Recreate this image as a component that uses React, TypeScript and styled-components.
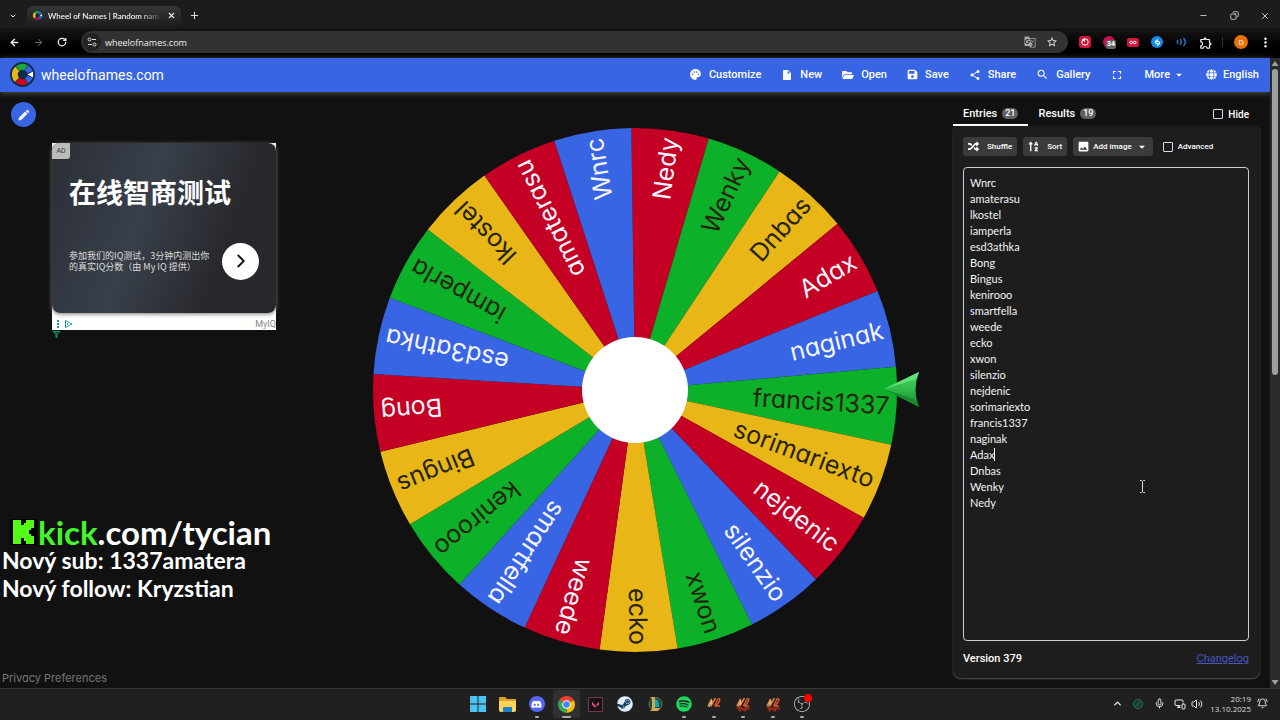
import React from "react";
import styled, { createGlobalStyle, css } from "styled-components";
import {
  MdPalette, MdInsertDriveFile, MdShare, MdSearch, MdFullscreen, MdArrowDropDown, MdEdit, MdImage,
  MdStarBorder, MdMoreVert, MdGTranslate, MdOutlineExtension,
} from "react-icons/md";
import { FaFolderOpen, FaGlobe, FaRandom, FaSortAlphaUp, FaDiscord, FaSteam, FaSpotify, FaSave } from "react-icons/fa";
import { SiValorant, SiObsstudio } from "react-icons/si";
import { ArrowLeft, ArrowRight, RotateCw, ChevronDown, ChevronUp, ChevronRight, X, Plus, Minus, Copy, Mic, MonitorSmartphone, Volume2, BellRing } from "lucide-react";

const ui = `Roboto, "Liberation Sans", sans-serif`;
const system = `"Open Sans", "Noto Sans", sans-serif`;
const rounded = `Lato, "Open Sans", sans-serif`;

const GlobalStyle = createGlobalStyle`
  *, *::before, *::after { box-sizing: border-box; }
  body { margin: 0; background: #111; color: #fff; font-family: ${ui}; font-size: 11px; }
  button { font: inherit; color: inherit; background: none; border: 0; padding: 0; }
  svg { display: block; flex: none; }
`;

const Screen = styled.div`
  display: flex;
  flex-direction: column;
  min-height: 100vh;
`;

/* ---------- browser chrome ---------- */
const TabStrip = styled.div`
  display: flex;
  align-items: center;
  height: 28px;
  padding: 3px 9px 0 7px;
  background: #1c1c1c;
  font-family: ${rounded};
`;
const Tab = styled.div`
  display: flex;
  align-items: center;
  width: 154px;
  height: 20px;
  margin: 0 7px 0 8px;
  padding: 0 4px 0 5px;
  gap: 5px;
  border-radius: 6px 6px 0 0;
  background: linear-gradient(#373737, #1d1d1d);
  font-size: 8px;
  font-weight: 500;
`;
const TabTitle = styled.span`
  flex: 1;
  white-space: nowrap;
  mask-image: linear-gradient(90deg, #000 82%, transparent 102%);
`;
const IconButton = styled.button<{ $size?: number; $dim?: boolean }>`
  display: flex;
  align-items: center;
  justify-content: center;
  width: ${(p) => p.$size ?? 12}px;
  height: ${(p) => p.$size ?? 12}px;
  color: ${(p) => (p.$dim ? "#777" : "#eee")};
`;
const WindowControls = styled.div`
  display: flex;
  gap: 19px;
  margin-left: auto;
`;
const RestoreIcon = styled(Copy)`
  transform: scaleX(-1);
`;
const Toolbar = styled.div`
  display: flex;
  align-items: center;
  height: 30px;
  padding: 0 10px 2px 8px;
  background: linear-gradient(#161616, #000 60%);
`;
const NavButtons = styled.div`
  display: flex;
  gap: 12px;
  margin-right: 13px;
`;
const AddressBar = styled.div`
  display: flex;
  align-items: center;
  flex: 1;
  height: 22px;
  padding: 0 10px 0 2px;
  gap: 10px;
  border-radius: 11px;
  background: #323232;
`;
const SiteInfo = styled.button`
  display: grid;
  place-items: center;
  width: 18px;
  height: 18px;
  margin-right: -6px;
  border-radius: 50%;
  background: #232323;
`;
const Address = styled.input`
  flex: 1;
  min-width: 0;
  padding: 0;
  border: 0;
  outline: 0;
  background: none;
  color: #eee;
  font: 9px ${system};
`;
const Extensions = styled.div`
  display: flex;
  align-items: center;
  gap: 12px;
  margin-left: 11px;
`;
const ExtensionIcon = styled.button<{ $bg?: string; $round?: boolean }>`
  position: relative;
  display: grid;
  place-items: center;
  width: 12px;
  height: 12px;
  border-radius: ${(p) => (p.$round ? "50%" : "3px")};
  background: ${(p) => p.$bg ?? "none"};
`;
const ExtensionCount = styled.span`
  position: absolute;
  left: 3px;
  top: 4px;
  padding: 0 1px;
  border-radius: 2px;
  background: #666;
  font-size: 7px;
  font-weight: 700;
  line-height: 9px;
`;
const Divider = styled.span`
  width: 1px;
  height: 10px;
  margin: 0 -1px;
  background: #333;
`;
const Profile = styled.button`
  width: 14px;
  height: 14px;
  border-radius: 50%;
  background: #e8710a;
  color: #fff;
  font-size: 8px;
`;

/* ---------- page ---------- */
const Viewport = styled.div`
  display: flex;
  flex: 1;
`;
const Page = styled.div`
  display: flex;
  flex: 1;
  flex-direction: column;
  min-width: 0;
  background: #111;
`;
const Scrollbar = styled.div`
  display: flex;
  flex-direction: column;
  align-items: center;
  justify-content: space-between;
  width: 10px;
  padding: 3px 0;
  background: #2b2b2b;
`;
const ScrollThumb = styled.div`
  width: 6px;
  height: 49%;
  margin: 2px 0 auto;
  border-radius: 3px;
  background: #9f9f9f;
`;
const Header = styled.header`
  display: flex;
  align-items: center;
  justify-content: space-between;
  height: 34px;
  padding: 0 1px 1px 10px;
  background: #3765e3;
  box-shadow: 0 1px 6px #555;
`;
const Brand = styled.a`
  display: flex;
  align-items: center;
  gap: 6px;
  color: #fff;
  font-size: 14px;
  text-decoration: none;
`;
const Menu = styled.nav`
  display: flex;
`;
const MenuButton = styled.button<{ $gap?: number }>`
  display: flex;
  align-items: center;
  gap: ${(p) => p.$gap ?? 7}px;
  height: 33px;
  padding: 0 10px;
  font-size: 11px;
  font-weight: 500;
`;
const Content = styled.main`
  display: grid;
  grid-template-columns: 330px minmax(0, 1fr) 330px;
  flex: 1;
`;
const LeftColumn = styled.section`
  display: flex;
  flex-direction: column;
  align-items: flex-start;
  padding: 10px 0 2px 2px;
`;
const EditButton = styled.button`
  display: grid;
  place-items: center;
  width: 25px;
  height: 25px;
  margin-left: 9px;
  border-radius: 50%;
  background: #3765e3;
`;
const Ad = styled.aside`
  width: 224px;
  margin: 16px 0 0 50px;
  background: #fff;
  font-family: "Noto Sans CJK SC", sans-serif;
`;
const AdCard = styled.div`
  display: grid;
  grid-template-rows: 16px 66px 1fr;
  height: 170px;
  border-radius: 8px;
  overflow: hidden;
  background: linear-gradient(110deg, #2b2e35, #39404a 40%, #27282c 75%);
  box-shadow: 0 1px 4px #777;
`;
const AdBadge = styled.span`
  justify-self: start;
  width: 18px;
  border-radius: 0 0 3px 0;
  background: #bbb;
  color: #333;
  font: 7px/16px ${ui};
  text-align: center;
`;
const AdTitle = styled.h2`
  margin: 0;
  padding-left: 17px;
  font-size: 27px;
  font-weight: 700;
  line-height: 66px;
`;
const AdBody = styled.div`
  display: flex;
  align-items: center;
  justify-content: space-between;
  padding: 0 17px 16px;
`;
const AdText = styled.p`
  margin: 0;
  color: #ddd;
  font-size: 9px;
  line-height: 11px;
  white-space: nowrap;
`;
const AdGo = styled.button`
  display: grid;
  place-items: center;
  width: 37px;
  height: 37px;
  border-radius: 50%;
  background: #fff;
  color: #111;
`;
const AdFooter = styled.div`
  display: flex;
  align-items: center;
  justify-content: space-between;
  height: 17px;
  padding: 5px 0 0 4px;
  color: #888;
  font: 9px/12px ${ui};
`;
const AdMark = styled.div`
  margin-left: 50px;
`;
const StreamInfo = styled.div`
  margin-top: auto;
  font-family: ${rounded};
  font-weight: 700;
`;
const KickLine = styled.div`
  display: flex;
  align-items: center;
  gap: 1px;
  margin-left: 8px;
  font-size: 33px;
  line-height: 28px;
`;
const Green = styled.span`
  color: #45f52c;
`;
const StreamLine = styled.div`
  font-size: 23px;
  line-height: 28px;
  white-space: nowrap;
`;
const Privacy = styled.button`
  margin-top: 68px;
  color: #777;
  font: 11px/16px Inter, sans-serif;
  font-feature-settings: "cv11";
`;
const WheelArea = styled.section`
  padding-top: 33px;
`;
const WheelSvg = styled.svg`
  width: 100%;
  max-height: 580px;
`;
const WheelText = styled.text`
  font-family: Inter, sans-serif;
  font-size: 25px;
  font-feature-settings: "cv11";
  dominant-baseline: central;
`;

/* ---------- entries panel ---------- */
const RightColumn = styled.section`
  display: flex;
  flex-direction: column;
  padding: 10px 10px 10px 13px;
`;
const TabRow = styled.div`
  display: flex;
  align-items: center;
  height: 24px;
`;
const PanelTab = styled.button<{ $active?: boolean }>`
  display: flex;
  align-items: center;
  gap: 5px;
  height: 24px;
  padding: 0 10px;
  border-bottom: 2px solid ${(p) => (p.$active ? "#fff" : "transparent")};
  font-size: 11px;
  font-weight: 500;
`;
const Count = styled.span`
  padding: 0 3px;
  border-radius: 6px;
  background: #606060;
  font-size: 9px;
  line-height: 11px;
`;
const CheckLabel = styled.label<{ $end?: boolean }>`
  display: flex;
  align-items: center;
  gap: 5px;
  margin-left: 4px;
  font-size: ${(p) => (p.$end ? 10 : 8)}px;
  font-weight: 500;
  ${(p) => p.$end && css`margin: 0 11px 0 auto;`}
`;
const Check = styled.input`
  appearance: none;
  width: 10px;
  height: 10px;
  margin: 0;
  border: 1px solid #ddd;
  border-radius: 1px;
`;
const Panel = styled.div`
  display: flex;
  flex: 1;
  flex-direction: column;
  padding: 11px 11px 0 10px;
  border-radius: 4px 4px 8px 8px;
  background: #1d1d1d;
  box-shadow: 0 1px 2px #555;
`;
const Tools = styled.div`
  display: flex;
  align-items: center;
  gap: 6px;
  margin-bottom: 11px;
`;
const ToolButton = styled.button<{ $gap?: number }>`
  display: flex;
  align-items: center;
  gap: ${(p) => p.$gap ?? 8}px;
  height: 19px;
  padding: 0 ${(p) => (p.$gap ? 4 : 5)}px;
  border-radius: 3px;
  background: #3b3b3b;
  font-size: 8px;
  font-weight: 500;
`;
const EntriesBox = styled.div`
  position: relative;
  display: flex;
  flex: 1;
`;
const EntriesInput = styled.textarea`
  flex: 1;
  min-height: 400px;
  padding: 7px 6px;
  border: 1px solid #ccc;
  border-radius: 4px;
  outline: 0;
  background: #1d1d1d;
  color: #f4f4f4;
  font: 11px/16px ${rounded};
  resize: none;
`;
const TextCaret = styled.span`
  position: absolute;
  left: 31px;
  top: 281px;
  width: 1px;
  height: 13px;
  background: #fff;
`;
const Pointer = styled.svg`
  position: absolute;
  left: 176px;
  top: 313px;
`;
const PanelFooter = styled.footer`
  display: flex;
  align-items: center;
  justify-content: space-between;
  height: 37px;
  padding-bottom: 2px;
  font-size: 11px;
  font-weight: 500;
`;
const Changelog = styled.a`
  color: #4a58c4;
  font-weight: 400;
`;

/* ---------- desktop taskbar ---------- */
const Taskbar = styled.footer`
  display: grid;
  grid-template-columns: 1fr auto 1fr;
  height: 32px;
  padding-bottom: 2px;
  border-top: 1px solid #383838;
  background: #202020;
`;
const Apps = styled.div`
  display: flex;
  grid-column: 2;
  width: 354px;
`;
const TaskbarApp = styled.button<{ $running?: boolean; $active?: boolean }>`
  position: relative;
  display: grid;
  flex: 1;
  place-items: center;
  margin: 1px 1px 0;
  border-radius: 3px;
  background: ${(p) => (p.$active ? "#303030" : "none")};
  &::after {
    content: "";
    position: absolute;
    bottom: 0;
    width: ${(p) => (p.$active ? 9 : 4)}px;
    height: 2px;
    border-radius: 1px;
    background: ${(p) => (p.$running ? "#aaa" : "none")};
  }
`;
const Disc = styled.span<{ $bg: string }>`
  display: grid;
  place-items: center;
  width: 16px;
  height: 16px;
  border-radius: 50%;
  background: ${(p) => p.$bg};
`;
const Tray = styled.div`
  display: flex;
  align-items: center;
  justify-content: flex-end;
  padding-right: 12px;
  color: #ddd;
`;
const TrayIcons = styled.div<{ $tight?: boolean }>`
  display: flex;
  align-items: center;
  gap: ${(p) => (p.$tight ? 5 : 9)}px;
  margin-right: ${(p) => (p.$tight ? 7 : 9)}px;
`;
const Clock = styled.div`
  margin-right: 5px;
  font: 8px/10px ${system};
  text-align: right;
`;

const slices = [
  "Nedy", "Wenky", "Dnbas", "Adax", "naginak", "francis1337", "sorimariexto", "nejdenic", "silenzio", "xwon", "ecko",
  "weede", "smartfella", "kenirooo", "Bingus", "Bong", "esd3athka", "iamperla", "lkostel", "amaterasu", "Wnrc",
];
const red = "#c40025";
const blue = "#3765e3";
const palette = [blue, "#0cb129", "#e8b717", red];
const sliceColor = (i: number) => (i === 0 ? red : palette[i % palette.length]);

function Wheel() {
  const step = 360 / slices.length;
  const start = -90.8;
  const radius = 262;
  const point = (deg: number) => {
    const r = (deg * Math.PI) / 180;
    return `${radius * Math.cos(r)} ${radius * Math.sin(r)}`;
  };
  return (
    <WheelSvg viewBox="0 0 610 530" role="img" aria-label="Wheel of names">
      <defs>
        <linearGradient id="pointer" x1="0" y1="0" x2="0" y2="1">
          <stop offset="0" stopColor="#50d56a" />
          <stop offset=".5" stopColor="#2fbb49" />
          <stop offset="1" stopColor="#17802b" />
        </linearGradient>
      </defs>
      <g transform="translate(305 265)">
        {slices.map((name, i) => {
          const a = start + i * step;
          const fill = sliceColor(i);
          const light = fill === red || fill === blue;
          return (
            <g key={name}>
              <path d={`M0 0L${point(a)}A${radius} ${radius} 0 0 1 ${point(a + step)}Z`} fill={fill} />
              <WheelText x={255} y={0} textAnchor="end" fill={light ? "#f6f4fb" : "#26240c"} transform={`rotate(${a + step / 2})`}>
                {name}
              </WheelText>
            </g>
          );
        })}
        <circle r="53" fill="#fff" />
      </g>
      <path d="M554 264L589 247Q582 265 589 282Z" fill="url(#pointer)" />
      <path d="M554 264L589 247L586 254Z" fill="#62e07a" />
      <path d="M554 264L589 282L586 275Z" fill="#18882f" />
    </WheelSvg>
  );
}

const WheelLogo = ({ size }: { size: number }) => (
  <svg width={size} height={size} viewBox="0 0 26 26">
    <circle cx="13" cy="13" r="13" fill="#0c2c4a" />
    <g fill="none" strokeWidth="6" transform="translate(13 13)">
      <path d="M-5 -6.200A8 8 0 0 1 3.500 -7.200" stroke="#1fa838" />
      <path d="M4 -7A8 8 0 0 1 7.600 -2.500" stroke={blue} />
      <path d="M-5.800 5.500A8 8 0 0 1 -5.400 -5.900" stroke="#e8b717" />
      <path d="M3.800 7A8 8 0 0 1 -5.400 5.900" stroke="#d0021f" />
      <path d="M7.600 2.500A8 8 0 0 1 4.300 6.700" stroke={blue} />
    </g>
    <path d="M18 13L24 10V16Z" fill="#fff" />
  </svg>
);

const KickLogo = () => (
  <svg width="27" height="26" viewBox="0 0 27 26">
    <path d="M0 0H27V26H0Z" fill="#000" />
    <path d="M3 1H11V6H14V4H16V1H24V9H21V11H19V15H21V17H24V25H16V22H14V19H11V25H3Z" fill="#53fc18" />
  </svg>
);

const Chrome = () => (
  <svg width="17" height="17" viewBox="-10 -10 20 20">
    <path d="M0 0L-8.660 -5A10 10 0 0 1 8.660 -5Z" fill="#e94235" />
    <path d="M0 0L8.660 -5A10 10 0 0 1 0 10Z" fill="#fbbc04" />
    <path d="M0 0L0 10A10 10 0 0 1 -8.660 -5Z" fill="#34a853" />
    <circle r="5" fill="#fff" />
    <circle r="3.900" fill="#4285f4" />
  </svg>
);

const Flame = ({ tall }: { tall?: boolean }) => (
  <svg width="16" height="16" viewBox="0 0 16 16">
    <g fill="none" stroke="#e89048" strokeWidth="1.500">
      <path d="M2 10L5.500 3V9L9.500 2" />
      <path d="M8.500 10L12 3Q15 2 13 6L10 10H14" stroke="#d8582a" />
      <path d="M3 11L6 5" stroke="#fce0a0" strokeWidth="1" />
    </g>
    {tall && <path d="M1 11L5 10L8 12L14 10L15 14L12 13L11 16L7 14L4 16L3 13Z" fill="#8f2a1a" />}
  </svg>
);

const entries = [...slices].reverse().join("\n");

export default function App() {
  return (
    <Screen>
      <GlobalStyle />
      <TabStrip>
        <IconButton aria-label="Search tabs"><ChevronDown size={8} strokeWidth={3} /></IconButton>
        <Tab>
          <WheelLogo size={11} />
          <TabTitle>Wheel of Names | Random nam</TabTitle>
          <IconButton aria-label="Close tab"><X size={9} strokeWidth={3} /></IconButton>
        </Tab>
        <IconButton aria-label="New tab"><Plus size={11} /></IconButton>
        <WindowControls>
          <IconButton aria-label="Minimize"><Minus size={9} /></IconButton>
          <IconButton aria-label="Restore"><RestoreIcon size={9} /></IconButton>
          <IconButton aria-label="Close"><X size={10} /></IconButton>
        </WindowControls>
      </TabStrip>
      <Toolbar>
        <NavButtons>
          <IconButton aria-label="Back"><ArrowLeft size={11} strokeWidth={3} /></IconButton>
          <IconButton aria-label="Forward" $dim><ArrowRight size={11} strokeWidth={2} /></IconButton>
          <IconButton aria-label="Reload"><RotateCw size={10} strokeWidth={3} /></IconButton>
        </NavButtons>
        <AddressBar>
          <SiteInfo aria-label="Site information">
            <svg width="10" height="10" viewBox="0 0 10 10" fill="none" stroke="#ddd">
              <circle cx="2.500" cy="2.500" r="1.500" /><path d="M5 2.500H9M1 7.500H5" /><circle cx="7.500" cy="7.500" r="1.500" />
            </svg>
          </SiteInfo>
          <Address aria-label="Address" defaultValue="wheelofnames.com" />
          <IconButton aria-label="Translate"><MdGTranslate size={12} color="#aaa" /></IconButton>
          <IconButton aria-label="Bookmark"><MdStarBorder size={12} /></IconButton>
        </AddressBar>
        <Extensions>
          <ExtensionIcon $bg="#d5143a" aria-label="Video blocker">
            <svg width="10" height="10" viewBox="0 0 10 10"><circle cx="5" cy="5" r="3.200" fill="none" stroke="#fff" /><path d="M5 5V1.500A3.500 3.500 0 0 0 2 3Z" fill="#fff" /></svg>
          </ExtensionIcon>
          <ExtensionIcon $bg="#c8104f" $round aria-label="Ad blocker"><ExtensionCount>34</ExtensionCount></ExtensionIcon>
          <ExtensionIcon aria-label="Video link">
            <svg width="12" height="10" viewBox="0 0 12 10"><rect width="12" height="9" y="1" rx="2" fill="#d5143a" /><g fill="none" stroke="#fff"><circle cx="4.200" cy="5.500" r="1.300" /><circle cx="7.800" cy="5.500" r="1.300" /></g></svg>
          </ExtensionIcon>
          <ExtensionIcon $bg="#168be5" $round aria-label="Music search">
            <svg width="9" height="9" viewBox="0 0 9 9" fill="none" stroke="#fff" strokeWidth="1.200"><path d="M5 1.500L2.500 3.500Q2 5 4 5.500L5.500 6M4 7.500L6.500 5.500Q7 4 5 3.500L3.500 3" /></svg>
          </ExtensionIcon>
          <ExtensionIcon aria-label="Volume">
            <svg width="11" height="10" viewBox="0 0 11 10" fill="none" stroke="#2180d8" strokeWidth="1.300"><path d="M1 3Q2.500 5 1 7M4 2Q6.500 5 4 8M7.500 1Q11 5 7.500 9" /></svg>
          </ExtensionIcon>
          <ExtensionIcon aria-label="Extensions"><MdOutlineExtension size={14} /></ExtensionIcon>
          <Divider />
          <Profile>D</Profile>
          <IconButton aria-label="Browser menu" $size={10}><MdMoreVert size={15} /></IconButton>
        </Extensions>
      </Toolbar>

      <Viewport>
        <Page>
          <Header>
            <Brand href="#"><WheelLogo size={25} />wheelofnames.com</Brand>
            <Menu>
              <MenuButton><MdPalette size={13} />Customize</MenuButton>
              <MenuButton><MdInsertDriveFile size={12} />New</MenuButton>
              <MenuButton><FaFolderOpen size={12} />Open</MenuButton>
              <MenuButton><FaSave size={11} />Save</MenuButton>
              <MenuButton><MdShare size={12} />Share</MenuButton>
              <MenuButton><MdSearch size={13} />Gallery</MenuButton>
              <MenuButton aria-label="Fullscreen"><MdFullscreen size={14} /></MenuButton>
              <MenuButton $gap={2}>More<MdArrowDropDown size={14} /></MenuButton>
              <MenuButton $gap={6}><FaGlobe size={11} />English</MenuButton>
            </Menu>
          </Header>
          <Content>
            <LeftColumn>
              <EditButton aria-label="Edit title"><MdEdit size={14} /></EditButton>
              <Ad>
                <AdCard>
                  <AdBadge>AD</AdBadge>
                  <AdTitle>在线智商测试</AdTitle>
                  <AdBody>
                    <AdText>参加我们的IQ测试，3分钟内测出你<br />的真实IQ分数（由 My IQ 提供）</AdText>
                    <AdGo aria-label="Open advertisement"><ChevronRight size={22} strokeWidth={2} /></AdGo>
                  </AdBody>
                </AdCard>
                <AdFooter>
                  <svg width="17" height="8" viewBox="0 0 17 8"><path d="M1 0H3V2H1ZM1 3H3V5H1ZM1 6H3V8H1Z" fill="#1696a8" /><path d="M9.500 .5L16 4L9.500 7.500ZM11.500 3V5" fill="none" stroke="#1696a8" /></svg>
                  MyIQ
                </AdFooter>
              </Ad>
              <AdMark>
                <svg width="9" height="8" viewBox="0 0 9 8" fill="none" stroke="#12a06c"><path d="M1 1.500H8L5 4.500V7.500H4V4.500ZM3 1.500L5 4.500" /></svg>
              </AdMark>
              <StreamInfo>
                <KickLine><KickLogo /><span><Green>kick</Green>.com/tycian</span></KickLine>
                <StreamLine>Nový sub: 1337amatera</StreamLine>
                <StreamLine>Nový follow: Kryzstian</StreamLine>
              </StreamInfo>
              <Privacy>Privacy Preferences</Privacy>
            </LeftColumn>
            <WheelArea><Wheel /></WheelArea>
            <RightColumn>
              <TabRow>
                <PanelTab $active>Entries<Count>21</Count></PanelTab>
                <PanelTab>Results<Count>19</Count></PanelTab>
                <CheckLabel $end><Check type="checkbox" />Hide</CheckLabel>
              </TabRow>
              <Panel>
                <Tools>
                  <ToolButton><FaRandom size={11} />Shuffle</ToolButton>
                  <ToolButton><FaSortAlphaUp size={11} />Sort</ToolButton>
                  <ToolButton $gap={3}><MdImage size={13} />Add image<MdArrowDropDown size={14} /></ToolButton>
                  <CheckLabel><Check type="checkbox" />Advanced</CheckLabel>
                </Tools>
                <EntriesBox>
                  <EntriesInput aria-label="Entries" defaultValue={entries} spellCheck={false} />
                  <TextCaret />
                  <Pointer width="7" height="13" viewBox="0 0 7 13" fill="none" stroke="#ddd"><path d="M1 .5H2.500L3.500 1.500L4.500 .5H6M3.500 1.500V11.500M1 12.500H2.500L3.500 11.500L4.500 12.500H6" /></Pointer>
                </EntriesBox>
                <PanelFooter>Version 379<Changelog href="#">Changelog</Changelog></PanelFooter>
              </Panel>
            </RightColumn>
          </Content>
        </Page>
        <Scrollbar aria-hidden>
          <svg width="8" height="6" viewBox="0 0 8 6"><path d="M4 0L7.500 5H.5Z" fill="#9f9f9f" /></svg>
          <ScrollThumb />
          <svg width="8" height="6" viewBox="0 0 8 6"><path d="M4 6L7.500 1H.5Z" fill="#9f9f9f" /></svg>
        </Scrollbar>
      </Viewport>

      <Taskbar>
        <Apps>
          <TaskbarApp aria-label="Start">
            <svg width="16" height="16" viewBox="0 0 16 16"><path d="M0 0H7.500V7.500H0ZM8.500 0H16V7.500H8.500ZM0 8.500H7.500V16H0ZM8.500 8.500H16V16H8.500Z" fill="#4cc2f1" /></svg>
          </TaskbarApp>
          <TaskbarApp aria-label="File Explorer">
            <svg width="17" height="15" viewBox="0 0 17 15"><path d="M0 1Q0 0 1 0H6L8 2H16Q17 2 17 3V14H0Z" fill="#e0a32a" /><path d="M0 4H17V13Q17 15 15 15H2Q0 15 0 13Z" fill="#fbd35b" /><path d="M4 15V11Q4 10 5 10H12Q13 10 13 11V15Z" fill="#1f7fc4" /></svg>
          </TaskbarApp>
          <TaskbarApp aria-label="Discord" $running><Disc $bg="#5865f2"><FaDiscord size={11} /></Disc></TaskbarApp>
          <TaskbarApp aria-label="Chrome" $running $active><Chrome /></TaskbarApp>
          <TaskbarApp aria-label="Valorant">
            <svg width="15" height="15" viewBox="0 0 15 15"><path d="M.5 .5H14.500V14.500H.5Z" fill="#17121a" stroke="#7d3348" /><SiValorant x="4" y="4" size={7} color="#f0506a" /></svg>
          </TaskbarApp>
          <TaskbarApp aria-label="Steam"><Disc $bg="#123a63"><FaSteam size={16} color="#e4eef8" /></Disc></TaskbarApp>
          <TaskbarApp aria-label="League of Legends">
            <svg width="16" height="16" viewBox="0 0 16 16"><circle cx="8.500" cy="8" r="6.500" fill="#0c4a50" stroke="#8a6d35" /><path d="M8 3Q13 4 12 11H8Z" fill="#16a3a6" /><path d="M3 1H8V12H13L11 15H3L5 13V3Z" fill="#d2a850" /></svg>
          </TaskbarApp>
          <TaskbarApp aria-label="Spotify" $running><FaSpotify size={16} color="#1ed760" /></TaskbarApp>
          <TaskbarApp aria-label="Game launcher" $running><Flame /></TaskbarApp>
          <TaskbarApp aria-label="Game client one" $running><Flame tall /></TaskbarApp>
          <TaskbarApp aria-label="Game client two" $running><Flame tall /></TaskbarApp>
          <TaskbarApp aria-label="OBS Studio" $running>
            <svg width="20" height="20" viewBox="0 0 20 20"><SiObsstudio x="2" y="2" size={16} color="#ccc" /><circle cx="16" cy="4" r="4" fill="#f00" /></svg>
          </TaskbarApp>
        </Apps>
        <Tray>
          <TrayIcons>
            <IconButton aria-label="Hidden icons"><ChevronUp size={11} strokeWidth={3} /></IconButton>
            <svg width="12" height="10" viewBox="-1 0 12 10" fill="#163c30" stroke="#2c6c55"><circle cx="5" cy="5" r="4.500" /><path d="M2.500 7.500L7.500 2.500" /></svg>
            <IconButton aria-label="Microphone"><Mic size={11} /></IconButton>
          </TrayIcons>
          <TrayIcons $tight>
            <IconButton aria-label="Network"><MonitorSmartphone size={12} /></IconButton>
            <IconButton aria-label="Sound"><Volume2 size={12} /></IconButton>
          </TrayIcons>
          <Clock>20:19<br />13.10.2025</Clock>
          <IconButton aria-label="Notifications"><BellRing size={11} /></IconButton>
        </Tray>
      </Taskbar>
    </Screen>
  );
}
